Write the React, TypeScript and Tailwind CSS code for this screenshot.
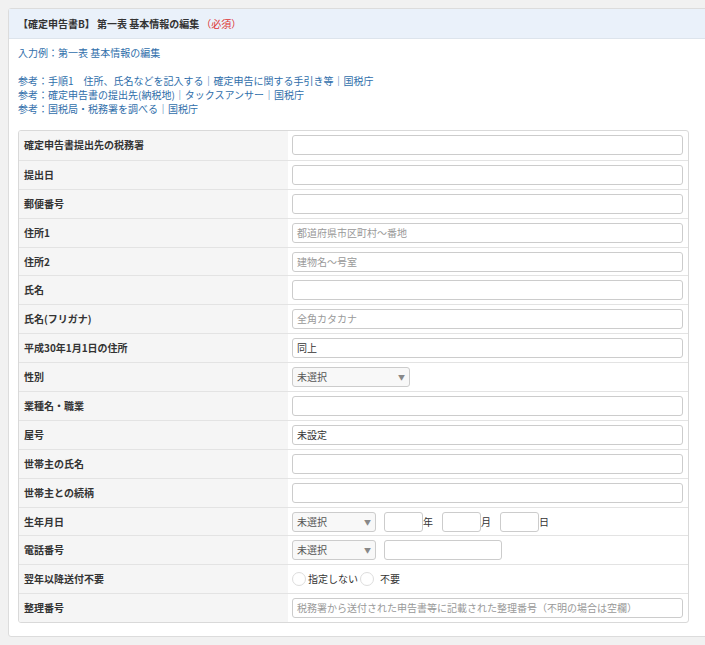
const font = { fontFamily: '"Noto Sans CJK JP", "Noto Sans", sans-serif' }

type Row = { label: string; kind: 'text' | 'select' | 'date' | 'tel' | 'radio'; value?: string; placeholder?: string }

const rows: Row[] = [
  { label: '確定申告書提出先の税務署', kind: 'text' },
  { label: '提出日', kind: 'text' },
  { label: '郵便番号', kind: 'text' },
  { label: '住所1', kind: 'text', placeholder: '都道府県市区町村〜番地' },
  { label: '住所2', kind: 'text', placeholder: '建物名〜号室' },
  { label: '氏名', kind: 'text' },
  { label: '氏名(フリガナ)', kind: 'text', placeholder: '全角カタカナ' },
  { label: '平成30年1月1日の住所', kind: 'text', value: '同上' },
  { label: '性別', kind: 'select' },
  { label: '業種名・職業', kind: 'text' },
  { label: '屋号', kind: 'text', value: '未設定' },
  { label: '世帯主の氏名', kind: 'text' },
  { label: '世帯主との続柄', kind: 'text' },
  { label: '生年月日', kind: 'date' },
  { label: '電話番号', kind: 'tel' },
  { label: '翌年以降送付不要', kind: 'radio' },
  { label: '整理番号', kind: 'text', placeholder: '税務署から送付された申告書等に記載された整理番号（不明の場合は空欄）' },
]

function Select({ w }: { w: string }) {
  return (
    <div className={`${w} h-[20px] border border-[#ccc] rounded-[3px] bg-[#f8f8f8] flex items-center justify-between px-[4px] text-[10px] text-[#555]`}>
      <span>未選択</span>
      <span className="text-[7px] text-[#888]">▼</span>
    </div>
  )
}

function Box({ w, children, ph }: { w: string; children?: string; ph?: boolean }) {
  return (
    <div className={`${w} h-[20px] border border-[#ccc] rounded-[3px] bg-white flex items-center px-[4px] text-[10px] ${ph ? 'text-[#999]' : 'text-[#333]'} whitespace-nowrap overflow-hidden`}>
      {children}
    </div>
  )
}

function Field({ r }: { r: Row }) {
  if (r.kind === 'select') return <Select w="w-[118px]" />
  if (r.kind === 'date')
    return (
      <div className="flex items-center text-[10px] text-[#333]">
        <Select w="w-[84px]" />
        <div className="w-[8px]" />
        <Box w="w-[39px]" /><span className="w-[19px]">年</span>
        <Box w="w-[39px]" /><span className="w-[19px]">月</span>
        <Box w="w-[39px]" /><span>日</span>
      </div>
    )
  if (r.kind === 'tel')
    return (
      <div className="flex items-center gap-[8px]">
        <Select w="w-[84px]" />
        <Box w="w-[118px]" />
      </div>
    )
  if (r.kind === 'radio')
    return (
      <div className="flex items-center text-[10px] text-[#333]">
        <span className="w-[14px] h-[14px] rounded-full border border-[#ddd] bg-white mr-[2px]" />
        <span className="mr-[2px]">指定しない</span>
        <span className="w-[14px] h-[14px] rounded-full border border-[#ddd] bg-white mr-[6px]" />
        <span>不要</span>
      </div>
    )
  return (
    <Box w="w-full" ph={!r.value && !!r.placeholder}>
      {r.value ?? r.placeholder}
    </Box>
  )
}

export default function App() {
  return (
    <div className="bg-[#f1f1f1] w-[705px] h-[645px] overflow-hidden pt-[8px] pl-[8px]" style={font}>
      <div className="bg-white border border-[#dcdcdc] rounded-[3px] w-[710px]">
        <div className="h-[30px] bg-[#eaf1fa] border-b border-[#dde4ec] flex items-center px-[9px] text-[10px] font-bold text-[#333]">
          【確定申告書B】 第一表 基本情報の編集<span className="text-[#d33] font-normal ml-[2px]">（必須）</span>
        </div>
        <div className="px-[9px] pt-[7px] pb-[13px] text-[10px] text-[#2f6eaa] leading-[14px]">
          <div>入力例：第一表 基本情報の編集</div>
          <div className="mt-[14px]">参考：手順1　住所、氏名などを記入する｜確定申告に関する手引き等｜国税庁</div>
          <div>参考：確定申告書の提出先(納税地)｜タックスアンサー｜国税庁</div>
          <div>参考：国税局・税務署を調べる｜国税庁</div>
          <div className="mt-[14px] w-[671px] border border-[#d9d9d9] rounded-[3px] overflow-hidden">
            {rows.map((r, i) => (
              <div key={i} className={`flex h-[28.9px] ${i ? 'border-t border-[#e3e3e3]' : ''}`}>
                <div className="w-[269px] bg-[#f5f5f5] flex items-center px-[5px] text-[10px] font-bold text-[#333]">{r.label}</div>
                <div className="flex-1 flex items-center pl-[4px] pr-[5px]">
                  <Field r={r} />
                </div>
              </div>
            ))}
          </div>
        </div>
      </div>
      <div className="mt-[10px] bg-[#eaf1fa] border border-[#dcdcdc] rounded-[3px] w-[710px] h-[20px]" />
    </div>
  )
}
